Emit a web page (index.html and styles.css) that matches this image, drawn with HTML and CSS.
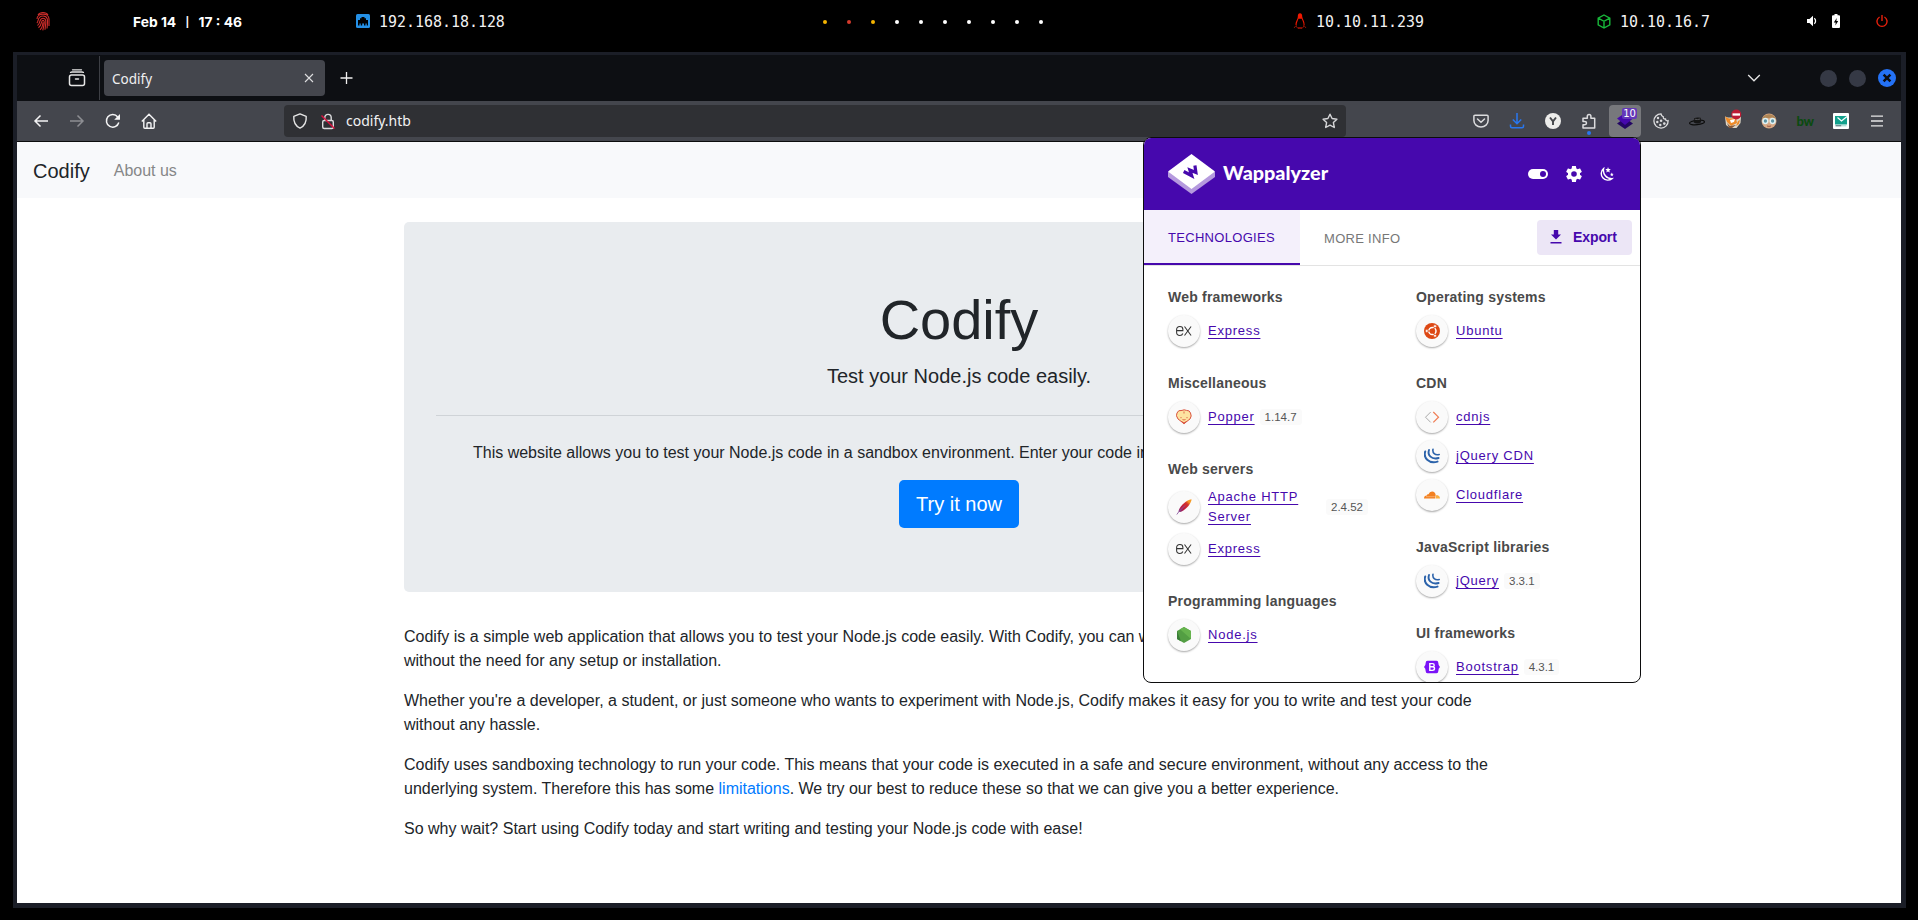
FILE: index.html
```html
<!DOCTYPE html>
<html lang="en">
<head>
<meta charset="utf-8">
<title>Codify</title>
<link rel="stylesheet" href="styles.css">
</head>
<body>
<svg class="defs" width="0" height="0">
  <symbol id="ex" viewBox="0 0 16 16"><path d="M.6 7.600h6.300V6.400C6.900 4.500 5.600 3.500 3.900 3.500S.6 4.700.6 6.800v2.400c0 2.100 1.500 3.300 3.300 3.300 1.500 0 2.500-.7 2.900-2M8.500 3.500l6.600 9M15.100 3.500l-6.600 9" fill="none" stroke="#333" stroke-width="1.050"/></symbol>
  <symbol id="jq" viewBox="0 0 16 16"><g fill="none" stroke="#2c63ab" stroke-linecap="round"><path d="M1.200 3.500C-.8 9.500 4.500 16 13.500 13.600" stroke-width="2"/><path d="M5 2C3.200 7 7.500 12 14.600 10" stroke-width="1.900"/><path d="M9 1.200C8.200 4.800 11 7.600 15.200 6.500" stroke-width="1.600"/></g></symbol>
</svg>

<header class="topbar">
  <svg class="fingerprint" viewBox="0 0 14 20" width="14" height="20"><g fill="none" stroke="#cf2d2b" stroke-width="1.100"><path d="M2 4C4 .6 10 .6 12 4M1 8C1 1.500 13 1.500 13 8v7M.8 12C2.800 11 1 5 7 5s4.500 6 4 12.500M1.500 14.500C5 12.500 2.500 7.200 7 7.200s2.400 6 2 11.500M2.500 16.800C6.500 14 4.500 9.400 7 9.400s.6 6-.2 10M4 18.700c2-1.500 2.700-4 3-7.500"/></g></svg>
  <div class="clock"><span>Feb 14</span><span class="bar">|</span><span>17 : 46</span></div>
  <div class="net net-lan">
    <svg viewBox="0 0 14 14" width="14" height="14"><rect width="14" height="14" rx="1.500" fill="#2490e6"/><path d="M2 11.500V6h2V4.300h1.500V3h3v1.300H10V6h2v5.500h-1.300V9.500H9.500v2H8v-2H6.200v2H4.700v-2H3.500v2z" fill="#000"/></svg>
    <span class="ip">192.168.18.128</span>
  </div>
  <div class="dots"><i class="amber"></i><i class="red"></i><i class="amber"></i><i></i><i></i><i></i><i></i><i></i><i></i><i></i></div>
  <div class="net net-target">
    <svg viewBox="0 0 14 17" width="14" height="17"><path d="M7 .3c1.700 0 2.300 1.400 2.200 3.300.1 2.500 2.600 4.700 2.400 8.200l-1 2c.4-4-1.200-6.300-1.900-8H5.500C4.800 8 3.400 9.700 3.600 13l-1.200-1.500c0-3 2.300-5 2.400-7.500C4.700 1.700 5.300.3 7 .3z" fill="#f01800"/><path d="M1 15l1.800-2.200L5 15.500M13 15l-1.800-2.200L9 15.500" fill="none" stroke="#8d1205"/><path d="M5 15h4" stroke="#c51505" stroke-width="1.300"/></svg>
    <span class="ip">10.10.11.239</span>
  </div>
  <div class="net net-vpn">
    <svg viewBox="0 0 14 15" width="14" height="15"><path d="M7 1l5.800 3.100v6.800L7 14l-5.800-3.100V4.100zM1.200 4.100L7 7.300l5.800-3.200M7 7.300V14" fill="none" stroke="#18b83a" stroke-width="1.400"/></svg>
    <span class="ip">10.10.16.7</span>
  </div>
  <div class="status">
    <svg class="volume" viewBox="0 0 10 12" width="10" height="12"><path d="M0 4h2.500L6 .8v10.400L2.500 8H0z" fill="#fff"/><path d="M7.300 3.200c1.700 1.400 1.700 4.200 0 5.600" fill="none" stroke="#fff" stroke-width="1.300"/></svg>
    <svg class="battery" viewBox="0 0 8 14" width="8" height="14"><path d="M2.500 0h3v1.200H7q1 0 1 1V13q0 1-1 1H1q-1 0-1-1V2.200q0-1 1-1h1.500z" fill="#fff"/><path d="M4.700 4L1.800 8.400h1.900L3.400 11.500 6.200 7H4.400z" fill="#000"/></svg>
    <svg class="power" viewBox="0 0 12 14" width="12" height="14"><path d="M3.600 3A5 5 0 1 0 8.400 3M6 1v6" fill="none" stroke="#e8200c" stroke-width="1.400"/></svg>
  </div>
</header>

<main class="window">
  <div class="tabbar">
    <svg class="recent" viewBox="0 0 18 18" width="18" height="18"><g fill="none" stroke="#e6e6e6" stroke-width="1.500" stroke-linecap="round"><rect x="1.500" y="6" width="15" height="10.600" rx="2"/><path d="M2.500 3.400Q3 3 4 3h10q1 0 1.500.4M4.500.8h9" stroke-width="1.300"/><path d="M7.500 10h3"/></g></svg>
    <div class="tab-sep"></div>
    <div class="tab"><span>Codify</span>
      <svg viewBox="0 0 10 10" width="10" height="10"><path d="M1 1l8 8M9 1L1 9" stroke="#dedee0" stroke-width="1.100"/></svg>
    </div>
    <svg class="newtab" viewBox="0 0 14 14" width="14" height="14"><path d="M6.500 1v12M.5 7h12" stroke="#f0f0f0" stroke-width="1.300"/></svg>
    <svg class="chevron" viewBox="0 0 14 8" width="14" height="8"><path d="M1.200 1L7 6.800 12.800 1" fill="none" stroke="#e6e6e6" stroke-width="1.300"/></svg>
    <div class="controls">
      <i></i><i></i>
      <svg viewBox="0 0 18 18" width="18" height="18"><circle cx="9" cy="9" r="9" fill="#2472f6"/><path d="M5.600 5.600l6.800 6.800M12.400 5.600l-6.800 6.800" stroke="#0d0f14" stroke-width="2.500"/></svg>
    </div>
  </div>

  <div class="toolbar">
    <div class="nav-buttons">
      <span class="tool"><svg viewBox="0 0 16 16" width="16" height="16"><path d="M15 8H2M7.500 2.500L2 8l5.500 5.500" fill="none" stroke="#f4f4f5" stroke-width="1.500"/></svg></span>
      <span class="tool"><svg viewBox="0 0 16 16" width="16" height="16"><path d="M1 8h13M8.500 2.500L14 8l-5.500 5.500" fill="none" stroke="#8d8e93" stroke-width="1.500"/></svg></span>
      <span class="tool"><svg viewBox="0 0 16 16" width="16" height="16"><path d="M13.800 9.500A6.300 6.300 0 1 1 12.700 4" fill="none" stroke="#f4f4f5" stroke-width="1.500"/><path d="M15 1v5.800H9.200z" fill="#f4f4f5"/></svg></span>
      <span class="tool"><svg viewBox="0 0 16 16" width="16" height="16"><path d="M.8 8.600L8 1.200l7.200 7.400M2.800 7v7.200q0 1 1 1h8.400q1 0 1-1V7M6 15v-4.200q0-1 1-1h2q1 0 1 1V15" fill="none" stroke="#f4f4f5" stroke-width="1.400"/></svg></span>
    </div>
    <div class="urlbar">
      <svg viewBox="0 0 16 16" width="16" height="16"><path d="M8 .9l6.200 2.400c.4 5-1.600 9.700-6.200 11.800C3.400 13 1.400 8.300 1.800 3.300z" fill="none" stroke="#e6e6e6" stroke-width="1.400" stroke-linejoin="round"/></svg>
      <svg class="lock" viewBox="0 0 16 17" width="16" height="17"><rect x="2.700" y="7.500" width="10.600" height="8" rx="1.500" fill="none" stroke="#dcdcde" stroke-width="1.400"/><path d="M4.800 7.500V4.600a3.200 3.200 0 0 1 6.400 0v2.900" fill="none" stroke="#dcdcde" stroke-width="1.400"/><path d="M1.500 2.500l13 13" stroke="#d9133f" stroke-width="1.500"/></svg>
      <span class="url">codify.htb</span>
      <svg class="star" viewBox="0 0 16 16" width="16" height="16"><path d="M8 1.200l2.100 4.300 4.800.7-3.500 3.400.9 4.900L8 12.200l-4.300 2.300.9-4.900L1.100 6.200l4.800-.7z" fill="none" stroke="#d6d6d8" stroke-width="1.400" stroke-linejoin="round"/></svg>
    </div>
    <div class="extensions">
      <span class="tool"><svg viewBox="0 0 16 16" width="16" height="16"><path d="M2 2.200h12q1.100 0 1.100 1.100V7.500a7.100 6.500 0 0 1-14.200 0V3.300Q.9 2.200 2 2.200zM4.500 6L8 9.200 11.500 6" fill="none" stroke="#dcdcde" stroke-width="1.500" stroke-linecap="round"/></svg></span>
      <span class="tool"><svg viewBox="0 0 16 16" width="16" height="16"><path d="M8 0v10.500M3.800 6.500L8 10.700l4.200-4.200M1.500 11.500v1.700q0 1.500 1.500 1.500h10q1.500 0 1.500-1.500v-1.700" fill="none" stroke="#2877f0" stroke-width="1.500"/></svg></span>
      <span class="tool"><svg viewBox="0 0 16 16" width="16" height="16"><circle cx="8" cy="8" r="8" fill="#ededeb"/><path d="M5 4.500L8 8.400l3-3.900M8 8v4" fill="none" stroke="#45474b" stroke-width="1.900"/></svg></span>
      <span class="tool puzzle"><svg viewBox="0 0 16 16" width="16" height="16"><path d="M2 14.900V11.800h1.800a1.700 1.700 0 0 0 0-3.400H2V5.200h4.300V3.300a1.800 1.800 0 0 1 3.600 0v1.900h3.800v9.700z" fill="none" stroke="#dcdcde" stroke-width="1.500" stroke-linejoin="round"/></svg></span>
      <span class="tool active"><svg viewBox="0 0 16 16" width="16" height="16"><path d="M0 10.500L8 5l8 5.500L8 16z" fill="#230664"/><path d="M0 5.500L8 0l8 5.500L8 12z" fill="#4608ad"/></svg><b class="badge">10</b></span>
      <span class="tool"><svg viewBox="0 0 16 16" width="16" height="16"><path d="M8 .9a7.100 7.100 0 1 0 7.100 6.800c-1.400.4-2.500-.4-2.600-1.700-1.500.3-2.500-.8-2.200-2.200C8.800 3.500 8.200 2.300 8 .9z" fill="none" stroke="#dcdcde" stroke-width="1.300"/><g fill="#dcdcde"><circle cx="5" cy="5" r="1.200"/><circle cx="4.300" cy="9" r="1.200"/><circle cx="8.100" cy="7.800" r="1.300"/><circle cx="7.300" cy="12" r="1.200"/><circle cx="11.300" cy="10.600" r="1.300"/></g></svg></span>
      <span class="tool"><svg viewBox="0 0 16 16" width="16" height="16"><ellipse cx="8" cy="9.500" rx="7.500" ry="2.200" fill="none" stroke="#0c0c0c" stroke-width="1.200" transform="rotate(-6 8 9.500)"/><path d="M4.800 9.600l.2-4.300q3-1.500 6.700-.5l.4 4.500q-3.700 2.200-7.300.3z" fill="#151515"/><path d="M5.700 6.200q2.800.8 5.400-.2" stroke="#55565a" fill="none"/></svg></span>
      <span class="tool"><svg class="fox" viewBox="0 0 18 20" width="18" height="20"><path d="M1 7.500l3 1 9 0 4-1-.5 6.500-4 5H6l-4-3z" fill="#e0d8c8"/><path d="M1 7.500l4 2 7-.5 1 5-6 3-4-4z" fill="#ef8b28"/><path d="M6 11l5-1-1 3-3 1z" fill="#fff"/><path d="M14 12l2-1-1 4-3 2z" fill="#ef8b28"/><path d="M3 14l3 3 6-1-4 3H5z" fill="#8a5a38"/><circle cx="12.300" cy="5.500" r="5" fill="#bd1c35"/><path d="M8.500 5.500h7.500" stroke="#fff" stroke-width="2.300"/></svg></span>
      <span class="tool"><svg viewBox="0 0 16 16" width="16" height="16"><circle cx="8" cy="8" r="7.500" fill="#d6a783"/><path d="M.8 7A7.300 7 0 0 1 15.200 7L11 4.500 4.500 5.500z" fill="#b08655"/><circle cx="4.400" cy="8" r="2.400" fill="#5c93a3" stroke="#dff0f2" stroke-width="1.500"/><circle cx="11.600" cy="8" r="2.400" fill="#5c93a3" stroke="#dff0f2" stroke-width="1.500"/><path d="M6 13q2 .8 4 0" stroke="#9c5745" fill="none"/></svg></span>
      <span class="tool bw">bw</span>
      <span class="tool"><svg viewBox="0 0 16 16" width="16" height="16"><rect width="16" height="16" rx="1" fill="#fff"/><path d="M2 3h12v8.500H2z" fill="#12a08c"/><path d="M4.500 4.500L8.500 8l5.500-4.500" fill="none" stroke="#fff" stroke-width="1.200"/><path d="M2.500 12.800h6" stroke="#305e63"/><path d="M9 12.800h4.500" stroke="#8fd6ca"/></svg></span>
      <span class="tool"><svg viewBox="0 0 16 16" width="16" height="16"><path d="M2 3.200h12M2 8h12M2 12.800h12" stroke="#e6e6e6" stroke-width="1.300"/></svg></span>
    </div>
  </div>

  <div class="page">
    <nav class="site-nav"><a class="brand">Codify</a><a class="nav-link">About us</a></nav>
    <div class="container">
      <section class="jumbotron">
        <h1>Codify</h1>
        <p class="lead">Test your Node.js code easily.</p>
        <hr>
        <p>This website allows you to test your Node.js code in a sandbox environment. Enter your code in the editor and see the output in real-time.</p>
        <a class="btn">Try it now</a>
      </section>
      <p>Codify is a simple web application that allows you to test your Node.js code easily. With Codify, you can write and run your code in the browser<br>without the need for any setup or installation.</p>
      <p>Whether you're a developer, a student, or just someone who wants to experiment with Node.js, Codify makes it easy for you to write and test your code without any hassle.</p>
      <p>Codify uses sandboxing technology to run your code. This means that your code is executed in a safe and secure environment, without any access to the underlying system. Therefore this has some <a class="link">limitations</a>. We try our best to reduce these so that we can give you a better experience.</p>
      <p>So why wait? Start using Codify today and start writing and testing your Node.js code with ease!</p>
    </div>
  </div>
</main>

<aside class="popup">
  <div class="popup-head">
    <svg viewBox="0 0 47 40" width="47" height="40"><path d="M0 20.500v2.500L23.500 40 47 23v-2.500z" fill="#b59ade"/><path d="M0 18v3L23.500 37.500 47 21v-3z" fill="#b59ade"/><path d="M23.500 0L47 17.500 23.500 35 0 17.500z" fill="#fff"/><path d="M15.700 17.500l8 4.200-1.800-5.700 6 2.500-1-7" fill="none" stroke="#4608ad" stroke-width="3.200"/></svg>
    <span class="logo-name">Wappalyzer</span>
    <svg class="toggle" viewBox="0 0 20 10" width="20" height="10"><rect width="20" height="10" rx="5" fill="#fff"/><circle cx="15" cy="5" r="3" fill="#4608ad"/></svg>
    <svg class="gear" viewBox="2 2 20 20" width="16" height="16"><path fill="#fff" d="M12 15.500A3.500 3.500 0 0 1 8.500 12 3.500 3.500 0 0 1 12 8.500a3.500 3.500 0 0 1 3.500 3.500 3.500 3.500 0 0 1-3.500 3.500m7.430-2.530c.04-.32.07-.64.07-.97s-.03-.66-.07-1l2.110-1.630c.19-.15.24-.42.12-.64l-2-3.460c-.12-.22-.39-.31-.61-.22l-2.490 1c-.52-.39-1.060-.73-1.690-.98l-.37-2.650A.506.506 0 0 0 14 2h-4c-.25 0-.46.18-.5.420l-.37 2.650c-.63.25-1.170.59-1.690.98l-2.490-1c-.22-.09-.49 0-.61.22l-2 3.460c-.13.22-.07.49.12.64L4.570 11c-.04.34-.07.67-.07 1s.03.65.07.97l-2.110 1.660c-.19.15-.25.42-.12.64l2 3.460c.12.22.39.3.61.22l2.490-1.010c.52.4 1.060.74 1.690.99l.37 2.650c.04.24.25.42.5.42h4c.25 0 .46-.18.5-.42l.37-2.650c.63-.26 1.170-.59 1.690-.99l2.490 1.010c.22.08.49 0 .61-.22l2-3.460c.12-.22.07-.49-.12-.64z"/></svg>
    <svg viewBox="0 0 15 15" width="15" height="15"><path d="M4.600 1.600A6.500 6.500 0 1 0 13 11.600C7.500 11.800 3.600 7 4.600 1.600z" fill="none" stroke="#fff" stroke-width="1.400"/><path d="M9 0l.8 2 2 .1-1.500 1.400.5 2L9 4.400 7.300 5.500l.5-2L6.300 2.100l2-.1zM12.800 5.500l.5 1.300 1.400.1-1.100.9.4 1.400-1.200-.8-1.100.8.3-1.400-1-.9 1.300-.1z" fill="#fff"/></svg>
  </div>
  <div class="popup-tabs">
    <span class="ptab ptab-on">TECHNOLOGIES</span>
    <span class="ptab">MORE INFO</span>
    <span class="export"><svg viewBox="0 0 12 14" width="12" height="14"><path d="M3.800 0h4.400v4.500H11L6 9.500 1 4.500h2.800zM.5 12h11v1.500H.5z" fill="#4608ad"/></svg>Export</span>
  </div>
  <div class="popup-body">
    <div class="col">
      <section class="cat"><h2>Web frameworks</h2>
        <div class="tech"><i class="ico"><svg width="16" height="16"><use href="#ex"/></svg></i><a>Express</a></div></section>
      <section class="cat"><h2>Miscellaneous</h2>
        <div class="tech"><i class="ico"><svg viewBox="0 0 16 16" width="16" height="16"><path d="M8 14.500L2 10Q-.6 6.500 1 4 2 .8 6 1.400 8 .2 10.500 1.400q3.200-.2 4 2.600 1.600 3-.5 6z" fill="#fde3a0" stroke="#d95340"/><path d="M4.500 12l3.500 3.300 3.500-3.300-1.500.3-2 1.200-2-1.200z" fill="#d95340"/><path d="M5 8v1.200M11 8v1.200M6.500 10.500q1.500 1 3 0M8 2.500v2" stroke="#df6a48" fill="none"/></svg></i><a>Popper</a><span class="ver">1.14.7</span></div></section>
      <section class="cat"><h2>Web servers</h2>
        <div class="tech"><i class="ico"><svg viewBox="0 0 16 16" width="16" height="16"><defs><linearGradient id="feather" x1="0" y1="1" x2="1" y2="0"><stop offset="0" stop-color="#7c2a80"/><stop offset=".35" stop-color="#c01d3c"/><stop offset=".65" stop-color="#d4342c"/><stop offset=".8" stop-color="#f59a24"/></linearGradient></defs><path d="M2.500 12.500C3 8 10 1 15.500.3 15.500 4.500 9.500 11.500 4 13z" fill="url(#feather)"/><path d="M.8 15.500L3 12.500l6-6" fill="none" stroke="#8d5aa0" stroke-width=".9"/></svg></i><a>Apache HTTP Server</a><span class="ver">2.4.52</span></div>
        <div class="tech"><i class="ico"><svg width="16" height="16"><use href="#ex"/></svg></i><a>Express</a></div></section>
      <section class="cat"><h2>Programming languages</h2>
        <div class="tech"><i class="ico"><svg viewBox="0 0 16 16" width="16" height="16"><path d="M8 0l7 4v8l-7 4-7-4V4z" fill="#539e43"/><path d="M8 0l7 4v8L4 2.300z" fill="#66b34e"/><path d="M1 4l4 10.300L1 12z" fill="#3a7d38"/></svg></i><a>Node.js</a></div></section>
    </div>
    <div class="col">
      <section class="cat"><h2>Operating systems</h2>
        <div class="tech"><i class="ico"><svg viewBox="0 0 16 16" width="16" height="16"><circle cx="8" cy="8" r="8" fill="#dd4814"/><circle cx="8.400" cy="8" r="3.600" fill="none" stroke="#fff" stroke-width="1.500"/><path d="M8.400 8H2M8.400 8l3.200-5.500M8.400 8l3.200 5.500" stroke="#dd4814" stroke-width="1.100"/><g fill="#fff" stroke="#dd4814" stroke-width=".5"><circle cx="2.800" cy="8" r="1.400"/><circle cx="11" cy="3.200" r="1.400"/><circle cx="11" cy="12.800" r="1.400"/></g></svg></i><a>Ubuntu</a></div></section>
      <section class="cat"><h2>CDN</h2>
        <div class="tech"><i class="ico"><svg viewBox="0 0 16 16" width="16" height="16"><path d="M6.700 3L1.500 8.200l5.200 5.200" fill="none" stroke="#aaa"/><path d="M9.300 3l5.200 5.200-5.200 5.200" fill="none" stroke="#f07c52" stroke-width="1.200"/></svg></i><a>cdnjs</a></div>
        <div class="tech"><i class="ico"><svg width="16" height="16"><use href="#jq"/></svg></i><a>jQuery CDN</a></div>
        <div class="tech"><i class="ico"><svg viewBox="0 0 16 16" width="16" height="16"><path d="M0 11.500Q0 8.700 2.800 8.600 2.800 7 4.500 7.200 5.600 4.300 8.300 4.500q2.800.2 3.400 3.400l-.6 3.600z" fill="#f38020"/><path d="M11.500 11.500l.8-3.600Q15.800 8 16 11.500z" fill="#faae40"/><path d="M2 9.700h8.800" stroke="#fbd7b0" stroke-width=".5"/></svg></i><a>Cloudflare</a></div></section>
      <section class="cat"><h2>JavaScript libraries</h2>
        <div class="tech"><i class="ico"><svg width="16" height="16"><use href="#jq"/></svg></i><a>jQuery</a><span class="ver">3.3.1</span></div></section>
      <section class="cat"><h2>UI frameworks</h2>
        <div class="tech"><i class="ico"><svg viewBox="0 0 16 16" width="16" height="16"><path d="M3.500 1.700h9q1.800 0 1.800 2 0 3 1.700 4.300-1.700 1.300-1.700 4.300 0 2-1.800 2h-9q-1.800 0-1.800-2Q1.700 9.300 0 8q1.700-1.300 1.700-4.300 0-2 1.800-2z" fill="#7a12f7"/><path d="M5.800 4.600h2.700q1.700 0 1.700 1.600 0 1.500-1.700 1.600 2 .1 2 1.800 0 1.800-2.100 1.800H5.800zM5.800 7.800h3" fill="none" stroke="#fff" stroke-width="1.400"/></svg></i><a>Bootstrap</a><span class="ver">4.3.1</span></div></section>
    </div>
  </div>
</aside>
</body>
</html>
```

FILE: styles.css
```css
* { box-sizing: border-box; }
body { margin: 0; width: 1918px; height: 920px; overflow: hidden; background: #000; font-family: "Liberation Sans", Arial, sans-serif; position: relative; }
svg { display: block; flex: none; }
.defs { position: absolute; }

/* desktop bar */
.topbar { height: 52px; padding-bottom: 10px; display: flex; align-items: center; color: #fff; }
.fingerprint { margin-left: 36px; }
.clock { width: 109px; margin-left: 83px; font: 700 13.800px Inter, sans-serif; white-space: nowrap; padding-top: 2px; display: flex; align-items: center; justify-content: space-between; }
.bar { font-size: 10px; }
.net { display: flex; align-items: center; }
.net-lan { margin-left: 114px; width: 160px; }
.ip { font: 16.500px "DejaVu Sans Mono", monospace; white-space: nowrap; transform: scaleX(.905); transform-origin: left; margin-left: 9px; width: 130px; color: #f2f2f2; }
.dots { display: flex; gap: 20px; margin-left: 307px; padding-top: 2px; }
.dots i { width: 4px; height: 4px; border-radius: 50%; background: #fff; }
.dots .amber { background: #f5b400; }
.dots .red { background: #d63a2c; }
.net-target { width: 130px; margin-left: 250px; }
.net-vpn { width: 120px; margin-left: 174px; }
.status { display: flex; align-items: center; margin-left: 90px; }
.battery { margin-left: 15px; }
.power { margin-left: 36px; }

/* browser window */
.window { margin-left: 13px; width: 1893px; height: 856px; border: solid #1b1e27; border-width: 3px 5px 5px 4px; display: flex; flex-direction: column; }
.tabbar { height: 46px; flex: none; background: #0d0f13; display: flex; align-items: center; }
.recent { margin-left: 51px; }
.tab-sep { width: 1px; height: 44px; background: #3d3f45; margin-left: 13px; }
.tab { margin-left: 4px; width: 221px; height: 36px; border-radius: 4px; background: #44464d; display: flex; align-items: center; justify-content: space-between; padding: 0 11px 0 8px; color: #f0f0f1; font: 13.500px "Noto Sans", sans-serif; }
.tab span { padding-top: 2px; }
.newtab { margin-left: 15px; }
.chevron { margin-left: auto; margin-right: 59px; }
.controls { display: flex; align-items: center; gap: 12px; margin-right: 5px; }
.controls i { width: 17px; height: 17px; border-radius: 50%; background: #353945; }
.toolbar { height: 41px; flex: none; background: #44464d; border-bottom: 1px solid #0c0c0d; display: flex; padding-top: 4px; }
.tool { width: 36px; height: 32px; display: flex; align-items: center; justify-content: center; position: relative; flex: none; }
.nav-buttons { display: flex; margin-left: 6px; }
.urlbar { margin-left: 117px; width: 1062px; height: 32px; background: #2f3034; border-radius: 4px; display: flex; align-items: center; padding: 0 8px; }
.lock { margin-left: 12px; }
.url { margin-left: 10px; font: 14px "Noto Sans", sans-serif; color: #f2f2f3; padding-bottom: 1px; }
.star { margin-left: auto; }
.extensions { display: flex; margin-left: 117px; }
.puzzle::after { content: ""; position: absolute; left: 16px; bottom: 2px; width: 4px; height: 4px; border-radius: 50%; background: #2877f0; }
.active { width: 32px; margin: 0 2px; background: #77787c; border-radius: 4px; }
.badge { position: absolute; top: 3px; right: 4px; width: 15px; height: 11px; border-radius: 2px; background: #6438b8; color: #fff; font: 10px/11px "DejaVu Sans", sans-serif; text-align: center; }
.fox { position: relative; top: -2px; }
.bw { color: #0b4a10; font: 900 13px Lato, sans-serif; letter-spacing: -.5px; }

/* website */
.page { flex: 1; background: #fff; color: #212529; font-size: 16px; line-height: 24px; }
.site-nav { height: 56px; background: #f8f9fb; padding: 1px 16px 0; display: flex; align-items: center; gap: 24px; }
.brand { font-size: 20px; }
.nav-link { color: #868788; }
.container { width: 1110px; margin: 24px auto 0; }
.container p { margin: 0 0 16px; }
.jumbotron { background: #e9ecef; border-radius: 5px; padding: 64px 32px; margin-bottom: 32.500px; text-align: center; height: 370.200px; }
.jumbotron h1 { font-size: 56px; line-height: 67.200px; font-weight: 400; margin: 0 0 8px; }
.jumbotron .lead { font-size: 20px; line-height: 30px; }
.jumbotron hr { border: 0; border-top: 1px solid #cfd3d7; margin: 24px 0 24.500px; }
.jumbotron hr + p { margin-bottom: 15.300px; }
.btn { display: inline-block; background: #007bff; color: #fff; font-size: 20px; line-height: 30px; padding: 9px 17px; border-radius: 5px; }
.link { color: #007bff; }

/* extension popup, floats over the browser window */
.popup { position: absolute; left: 1143px; top: 137px; width: 498px; height: 546px; border: 1px solid #0c0c0d; border-radius: 8px; background: #fff; overflow: hidden; }
.popup-head { height: 72px; background: #4608ad; display: flex; align-items: center; padding: 0 26px 0 24px; }
.logo-name { color: #fff; font: 900 19.800px Lato, sans-serif; margin-left: 8px; padding-bottom: 4px; }
.toggle { margin-left: auto; }
.gear { margin: 0 17px 0 18px; }
.popup-tabs { height: 56px; border-bottom: 1px solid #e3e3e3; display: flex; align-items: center; font-size: 13px; letter-spacing: .3px; }
.ptab { height: 55px; padding: 1px 24px 0; display: flex; align-items: center; color: #777; }
.ptab-on { width: 156px; padding-top: 2px; background: #f4f0fb; color: #4608ad; border-bottom: 2px solid #4608ad; }
.export { margin: 0 8px 0 auto; width: 95px; height: 35px; background: #ece6f6; border-radius: 4px; color: #4608ad; font-size: 14px; font-weight: 700; letter-spacing: -.1px; display: flex; align-items: center; padding: 0 0 1px 13px; gap: 11px; }
.popup-body { display: flex; gap: 48px; padding: 19px 24px 0; }
.col { width: 200px; }
.cat { margin-bottom: 20.700px; }
.cat h2 { margin: 0 0 2.700px; font-size: 14px; line-height: 24px; letter-spacing: .22px; color: #4a4a4a; }
.tech { display: flex; align-items: center; min-height: 38.800px; padding: 2.600px 0; }
.ico { width: 32px; height: 32px; flex: none; border-radius: 50%; background: #fafafa; box-shadow: 0 1px 2px rgba(0,0,0,.35); display: flex; align-items: center; justify-content: center; margin-right: 8px; }
.tech a { color: #4608ad; font-size: 13px; line-height: 20px; letter-spacing: .78px; text-decoration: underline; text-underline-offset: 3px; text-decoration-thickness: 1px; text-decoration-skip-ink: none; }
.ver { margin-left: 5px; background: #fafafa; border-radius: 3px; font-size: 11.500px; line-height: 16px; padding: 0 5px; color: #555; }
```
